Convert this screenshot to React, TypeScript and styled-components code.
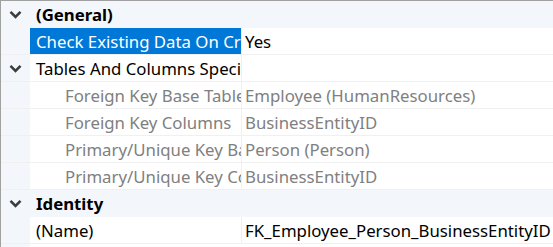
import React from 'react';
import styled, { createGlobalStyle } from 'styled-components';

const GlobalStyle = createGlobalStyle`
  html, body {
    margin: 0;
    padding: 0;
    background: #ffffff;
  }
  body {
    font-family: 'Noto Sans', 'Open Sans', sans-serif;
  }
`;

const Grid = styled.div`
  width: 553px;
  height: 247px;
  box-sizing: border-box;
  border-top: 1px solid #a0a0a0;
  border-left: 1px solid #a0a0a0;
  background: linear-gradient(to right, #f3f6fa 29px, #ffffff 29px);
  overflow: hidden;
`;

const Row = styled.div<{ $category?: boolean }>`
  display: grid;
  grid-template-columns: 29px 212px 1fr;
  height: 27px;
  box-sizing: border-box;
  background: ${p => (p.$category ? '#f3f6fa' : 'transparent')};
  border-bottom: 1px solid ${p => (p.$category ? '#f3f6fa' : '#f0f0f0')};
  font-size: 16.8px;
  line-height: 27px;
  white-space: nowrap;
`;

const Gutter = styled.div`
  display: flex;
  align-items: center;
  justify-content: center;
  padding-right: 1px;
  background: #f3f6fa;
`;

const Label = styled.div<{ $selected?: boolean; $muted?: boolean; $bold?: boolean; $indent?: boolean; $wide?: boolean }>`
  overflow: hidden;
  text-overflow: clip;
  padding-left: ${p => (p.$indent ? '35px' : '6px')};
  grid-column: ${p => (p.$wide ? '2 / 4' : 'auto')};
  background: ${p => (p.$selected ? '#0078d7' : 'transparent')};
  color: ${p => (p.$selected ? '#ffffff' : p.$muted ? '#808080' : '#000000')};
  font-weight: ${p => (p.$bold ? 700 : 400)};
  border-right: ${p => (p.$wide ? 'none' : '1px solid #f0f0f0')};
`;

const Value = styled.div<{ $muted?: boolean }>`
  overflow: hidden;
  padding-left: 3px;
  color: ${p => (p.$muted ? '#808080' : '#000000')};
`;

const Chevron = () => (
  <svg width="13" height="9" viewBox="0 0 13 9">
    <path d="M1.5 1.8 L6.5 6.8 L11.5 1.8" fill="none" stroke="#3c3c3c" strokeWidth="2.6" />
  </svg>
);

type Prop = { label: string; value?: string; muted?: boolean; selected?: boolean };

const CategoryRow: React.FC<{ title: string; bold?: boolean }> = ({ title, bold }) => (
  <Row $category={bold}>
    <Gutter>
      <Chevron />
    </Gutter>
    <Label $bold={bold} $wide={bold}>
      {title}
    </Label>
    {!bold && <Value />}
  </Row>
);

const PropRow: React.FC<Prop & { indent?: boolean }> = ({ label, value, muted, selected, indent }) => (
  <Row>
    <Gutter />
    <Label $selected={selected} $muted={muted} $indent={indent}>
      {label}
    </Label>
    <Value $muted={muted}>{value}</Value>
  </Row>
);

export default function App() {
  return (
    <>
      <GlobalStyle />
      <Grid>
        <CategoryRow title="(General)" bold />
        <PropRow label="Check Existing Data On Creation" value="Yes" selected />
        <CategoryRow title="Tables And Columns Specification" />
        <PropRow label="Foreign Key Base Table" value="Employee (HumanResources)" muted indent />
        <PropRow label="Foreign Key Columns" value="BusinessEntityID" muted indent />
        <PropRow label="Primary/Unique Key Base Table" value="Person (Person)" muted indent />
        <PropRow label="Primary/Unique Key Columns" value="BusinessEntityID" muted indent />
        <CategoryRow title="Identity" bold />
        <PropRow label="(Name)" value="FK_Employee_Person_BusinessEntityID" />
      </Grid>
    </>
  );
}
